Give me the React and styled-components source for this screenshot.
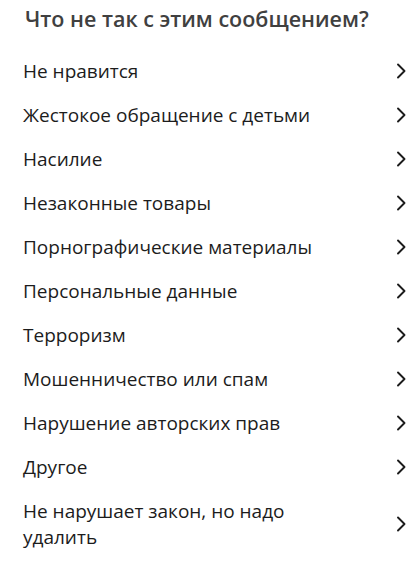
import React from 'react'
import styled, { createGlobalStyle } from 'styled-components'

const GlobalStyle = createGlobalStyle`
body {
  margin: 0;
  background: #ffffff;
  font-family: "Open Sans", "Noto Sans", sans-serif;
}
`

const Panel = styled.div`
width: 416px;
padding: 4px 9px 0 23px;
box-sizing: border-box;
`

const Title = styled.h2`
margin: 0 0 15px 2px;
font-size: 21.5px;
line-height: 30px;
font-weight: 600;
color: #404040;
`

const List = styled.ul`
list-style: none;
margin: 0;
padding: 0;
`

const Row = styled.li`
display: flex;
align-items: center;
justify-content: space-between;
padding: 9px 0;
cursor: pointer;
`

const Label = styled.span`
max-width: 300px;
font-size: 19px;
line-height: 26px;
color: #1c1c1c;
`

const Chevron = () => (
  <svg width="12" height="16" viewBox="0 0 12 16" fill="none">
    <path d="M3 1.5 L9.5 8 L3 14.5" stroke="#1c1c1c" strokeWidth="1.9" strokeLinecap="round" strokeLinejoin="round" />
  </svg>
)

const reasons = [
  'Не нравится',
  'Жестокое обращение с детьми',
  'Насилие',
  'Незаконные товары',
  'Порнографические материалы',
  'Персональные данные',
  'Терроризм',
  'Мошенничество или спам',
  'Нарушение авторских прав',
  'Другое',
  'Не нарушает закон, но надо удалить',
]

export default function App() {
  return (
    <Panel>
      <GlobalStyle />
      <Title>Что не так с этим сообщением?</Title>
      <List>
        {reasons.map((r) => (
          <Row key={r}>
            <Label>{r}</Label>
            <Chevron />
          </Row>
        ))}
      </List>
    </Panel>
  )
}
